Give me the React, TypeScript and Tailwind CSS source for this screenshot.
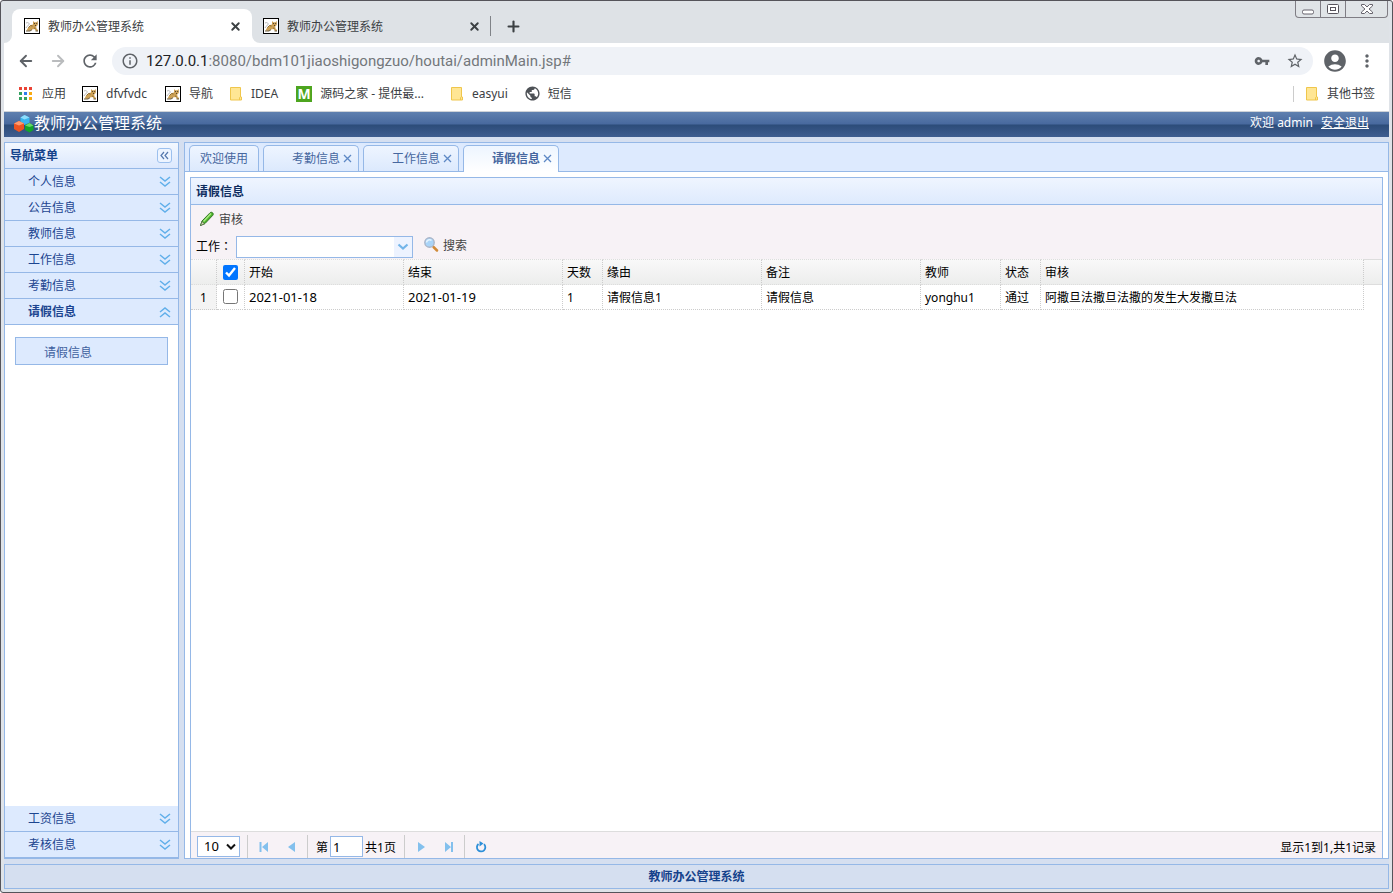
import { ArrowLeft, ArrowRight, X, Plus } from 'lucide-react';
import { MdRefresh, MdInfoOutline, MdVpnKey, MdStarBorder, MdAccountCircle, MdMoreVert, MdPublic } from 'react-icons/md';

const CJK = "font-['Noto_Sans','Noto_Sans_CJK_SC',sans-serif]";

const topMenus = ['个人信息', '公告信息', '教师信息', '工作信息', '考勤信息'];
const bottomMenus = ['工资信息', '考核信息'];

const columns = [
  { title: '开始', width: 'w-[159px]', value: '2021-01-18', cell: 'text-[13px]' },
  { title: '结束', width: 'w-[159px]', value: '2021-01-19', cell: 'text-[13px]' },
  { title: '天数', width: 'w-[40px]', value: '1', cell: 'pt-[2px]' },
  { title: '缘由', width: 'w-[159px]', value: '请假信息1', cell: 'pt-[2px]' },
  { title: '备注', width: 'w-[159px]', value: '请假信息', cell: 'pt-[2px]' },
  { title: '教师', width: 'w-[80px]', value: 'yonghu1', cell: 'pt-[2px]' },
  { title: '状态', width: 'w-[40px]', value: '通过', cell: 'pt-[2px]' },
  { title: '审核', width: 'w-[323px]', value: '阿撒旦法撒旦法撒的发生大发撒旦法', cell: 'pt-[2px]' },
];

function TomcatIcon() {
  return (
    <svg width="16" height="16" viewBox="0 0 16 16" className="shrink-0">
      <rect x="0.5" y="0.5" width="15" height="15" fill="#fff" stroke="#000" />
      <path d="M2 5c2-1 3.500 0 3 1.500S2.500 8 2 10" stroke="#b5b5b5" fill="none" />
      <path d="M2.500 12.500l2-3.500 2.500-2 2-.500V3l1.300 1.200h2L13.800 3v4l-1.600 1.500.300 2 1.500 1.500v1h-2L10.500 11l-2.500.500-2 1.500z" fill="#cda155" />
      <path d="M2 13h4l2-1.300M11.500 13H14" stroke="#6b5c43" fill="none" />
      <path d="M4.500 9.500l2-2 2 .500M10 10l1.500.500" stroke="#8b6a34" fill="none" />
      <path d="M10 5.500h1M12.200 5.500h1M11 7.500h1" stroke="#50402b" />
    </svg>
  );
}

function FolderIcon() {
  return (
    <svg width="14" height="16" viewBox="0 0 14 16" className="shrink-0">
      <path d="M1.500 1.500h10v9.500h1v3h-11z" fill="#ffe694" stroke="#efc64c" />
      <path d="M10.500 14v-2.500l1-1" fill="none" stroke="#efc64c" />
    </svg>
  );
}

function Chevrons({ up = false }: { up?: boolean }) {
  return (
    <svg width="12" height="12" viewBox="0 0 12 12" className={up ? 'rotate-180' : ''}>
      <path d="M1 1l5 4 5-4M1 6l5 4 5-4" fill="none" stroke="#61afea" strokeWidth="1.500" />
    </svg>
  );
}

function BrowserTab({ active = false }: { active?: boolean }) {
  return (
    <div className={`relative flex h-[34px] w-60 items-center pr-[10px] pl-3 ${active ? 'rounded-t-lg bg-white' : ''}`}>
      {active && (
        <>
          <svg width="8" height="8" className="absolute bottom-0 -left-2"><path d="M8 0v8H0a8 8 0 0 0 8-8z" fill="#fff" /></svg>
          <svg width="8" height="8" className="absolute -right-2 bottom-0"><path d="M0 0v8h8a8 8 0 0 1-8-8z" fill="#fff" /></svg>
        </>
      )}
      <TomcatIcon />
      <span className="ml-2 flex-1 pt-[2px] text-xs text-[#3c4043]">教师办公管理系统</span>
      <button aria-label="关闭" className="text-[#3c4043]"><X size={13} strokeWidth={3.5} /></button>
    </div>
  );
}

function WindowButtons() {
  return (
    <div className="absolute top-0 right-px flex h-[17px] rounded-b border border-t-0 border-[#7f7d84] bg-[#e0e4e7]">
      <button aria-label="最小化" className="flex w-[25px] items-end justify-center border-r border-[#7f7d84] pb-[2px]">
        <svg width="12" height="6"><rect x="0.500" y="1" width="11" height="4" rx="1.500" fill="#fff" stroke="#66636c" /></svg>
      </button>
      <button aria-label="最大化" className="flex w-[25px] items-center justify-center border-r border-[#7f7d84]">
        <svg width="12" height="10"><rect x="0.500" y="0.500" width="11" height="9" rx="1" fill="#fff" stroke="#57545c" /><rect x="3.500" y="3.500" width="5" height="3" fill="none" stroke="#57545c" /></svg>
      </button>
      <button aria-label="关闭窗口" className="flex w-[41px] items-center justify-center">
        <svg width="12" height="10" viewBox="0 0 12 10"><path d="M.5.5h3L6 3 8.500.5h3v1.500L8 5l3.500 3v1.500h-3L6 7 3.500 9.500h-3V8L4 5 .5 2z" fill="#fff" stroke="#66636c" /></svg>
      </button>
    </div>
  );
}

function BrowserChrome() {
  return (
    <div className="shrink-0 text-[#3c4043]">
      <div className="relative flex h-[42px] items-end bg-[#dee2e6] pl-2">
        <BrowserTab active />
        <div className="-ml-px"><BrowserTab /></div>
        <div className="mb-[7px] -ml-px h-5 w-px bg-[#808388]" />
        <button aria-label="新标签页" className="mb-2 ml-[14px]"><Plus size={17} strokeWidth={3} /></button>
        <WindowButtons />
      </div>

      <div className="flex h-9 items-center bg-white pr-3 pl-[13px]">
        <button aria-label="后退" className="text-[#5f6368]"><ArrowLeft size={18} strokeWidth={2.500} /></button>
        <button aria-label="前进" className="ml-[14px] text-[#babcbe]"><ArrowRight size={18} strokeWidth={2.500} /></button>
        <button aria-label="刷新" className="ml-[13px] text-[#5f6368]"><MdRefresh size={20} /></button>
        <div className="ml-3 flex h-7 flex-1 items-center rounded-full bg-[#eff2f7] px-[9px] text-[#5f6368]">
          <MdInfoOutline size={18} />
          <span className="ml-[7px] flex-1 font-[Roboto,sans-serif] text-[15px] leading-7 text-[#73777b]">
            <span className="text-[#202124]">127.0.0.1</span>:8080/bdm101jiaoshigongzuo/houtai/adminMain.jsp#
          </span>
          <button aria-label="密码"><MdVpnKey size={16} /></button>
          <button aria-label="收藏" className="ml-4"><MdStarBorder size={18} /></button>
        </div>
        <button aria-label="用户" className="ml-[9px] text-[#5f6368]"><MdAccountCircle size={26} /></button>
        <button aria-label="更多" className="ml-[9px] text-[#5f6368]"><MdMoreVert size={20} /></button>
      </div>

      <div className="flex h-[33px] items-center border-b border-[#cfd3d8] bg-white pr-[14px] pb-[3px] pl-[15px] text-xs">
        <a href="#" className="flex items-center gap-[9px]">
          <svg width="14" height="14">
            <path d="M0 0h3v3H0zM5 0h3v3H5zM10 0h3v3h-3z" fill="#ea4335" />
            <path d="M0 5h3v3H0zM0 10h3v3H0zM5 10h3v3H5z" fill="#34a160" />
            <path d="M5 5h3v3H5z" fill="#2f7df0" />
            <path d="M10 5h3v3h-3zM10 10h3v3h-3z" fill="#f9ab12" />
          </svg>
          应用
        </a>
        <a href="#" className="ml-4 flex items-center gap-2"><TomcatIcon />dfvfvdc</a>
        <a href="#" className="ml-[18px] flex items-center gap-2"><TomcatIcon />导航</a>
        <a href="#" className="ml-4 flex items-center gap-2"><FolderIcon />IDEA</a>
        <a href="#" className="ml-[18px] flex items-center gap-2">
          <span className="size-4 bg-[#4da51f] text-center text-sm leading-4 font-bold text-white">M</span>
          源码之家 - 提供最...
        </a>
        <a href="#" className="ml-[26px] flex items-center gap-2"><FolderIcon />easyui</a>
        <a href="#" className="ml-4 flex items-center gap-[7px]"><MdPublic size={17} className="text-[#4d5156]" />短信</a>
        <div className="flex-1" />
        <div className="h-4 w-px bg-[#ccc]" />
        <a href="#" className="ml-[11px] flex items-center gap-2"><FolderIcon />其他书签</a>
      </div>
    </div>
  );
}

function AppHeader() {
  return (
    <header className="flex h-[25px] shrink-0 items-center bg-linear-[180deg,#5f80af_0%,#48699e_48%,#2c4c79_52%,#3e5d90_100%] pr-5 pb-1 pl-[10px] text-white">
      <svg width="20" height="18" viewBox="0 0 20 18" className="mt-[3px] shrink-0">
        <path d="M10.500 0l5 2.500v5l-5 2.500-4-2.500v-5z" fill="#39b5ed" />
        <path d="M10.500 0l5 2.500-5 2-4-2z" fill="#8ddcfb" />
        <path d="M5 6l5 2.500v5.500l-5 3-5-3V8.500z" fill="#ed5422" />
        <path d="M5 6l5 2.500-5 2-5-2z" fill="#ff9a6e" />
        <path d="M15.500 8l4 2.500v4.500l-4 2.500-4.500-2.500v-4.500z" fill="#12a52a" />
        <path d="M15.500 8l4 2.500-4 1.500-4.500-1.500z" fill="#65d968" />
      </svg>
      <h1 className="flex-1 text-base leading-5">教师办公管理系统</h1>
      <span className="text-xs">欢迎 admin</span>
      <a href="#" className="ml-2 text-xs underline">安全退出</a>
    </header>
  );
}

function MenuItem({ title }: { title: string }) {
  return (
    <button className="flex h-[26px] w-full shrink-0 items-center justify-between border-b border-[#95b8e7] bg-[#ddeafe] pr-[7px] pl-[23px] text-xs text-[#1c4590]">
      {title}
      <Chevrons />
    </button>
  );
}

function Sidebar() {
  return (
    <nav className="flex w-[175px] shrink-0 flex-col border border-[#95b8e7] bg-white text-xs">
      <div className="flex h-[26px] shrink-0 items-center justify-between border-b border-[#95b8e7] bg-linear-to-b from-[#f3f8ff] to-[#dce8fd] pr-[6px] pl-[5px] font-bold text-[#15428b]">
        导航菜单
        <button aria-label="收起" className="mb-px flex size-[15px] items-center justify-center rounded-[3px] border border-[#9cc0ee] bg-[#edf4ff]">
          <svg width="9" height="9"><path d="M4 1l-3 3.500 3 3.500M8 1l-3 3.500 3 3.500" fill="none" stroke="#5578ad" strokeWidth="1.200" /></svg>
        </button>
      </div>
      {topMenus.map((title) => <MenuItem key={title} title={title} />)}
      <button className="flex h-[26px] w-full shrink-0 items-center justify-between border-b border-[#95b8e7] bg-[#ddeafe] pr-[7px] pl-[23px] font-bold text-[#1c4590]">
        请假信息
        <Chevrons up />
      </button>
      <div className="flex-1 px-[10px] pt-3">
        <a href="#" className="flex h-7 items-center border border-[#95b8e7] bg-[#ddeafe] pt-[3px] pl-7 text-[#3f619f]">请假信息</a>
      </div>
      {bottomMenus.map((title) => <MenuItem key={title} title={title} />)}
    </nav>
  );
}

function Tabs() {
  return (
    <div className="flex h-[29px] shrink-0 items-end gap-1 border-b border-[#95b8e7] bg-[#ddeafe] pl-1 text-xs text-[#46679f]">
      <button className="h-[26px] w-[70px] rounded-t-[5px] border border-b-0 border-[#95b8e7] bg-linear-to-b from-[#eef5ff] to-[#dce9fd]">欢迎使用</button>
      {['考勤信息', '工作信息', '请假信息'].map((title) => (
        <button
          key={title}
          className={`flex w-24 items-center justify-end gap-[3px] rounded-t-[5px] border border-b-0 border-[#95b8e7] bg-linear-to-b pr-[6px] ${
            title === '请假信息' ? '-mb-px h-[27px] from-[#edf5ff] to-white pb-px font-bold' : 'h-[26px] from-[#eef5ff] to-[#dce9fd]'
          }`}
        >
          {title}
          <svg width="9" height="9"><path d="M1 1l7 7M8 1l-7 7" stroke="#5d88c5" strokeWidth="1.300" /></svg>
        </button>
      ))}
    </div>
  );
}

function Toolbar() {
  return (
    <div className="h-[54px] shrink-0 bg-[#f7f2f6] text-xs">
      <div className="flex h-7 items-center pl-2">
        <button className="flex items-center gap-1 text-[#444]">
          <svg width="16" height="16" viewBox="0 0 16 16">
            <path d="M1.500 14.500l1.500-4.500L11 1.800c.8-.8 2-.6 2.600 0s1 1.500.2 2.500L6 12.500z" fill="#4cb42b" stroke="#347526" />
            <path d="M4.500 10.500l7.500-8" stroke="#aae982" strokeWidth="1.500" />
            <path d="M1.500 14.500l1.500-4 2.500 2.300z" fill="#d8dfba" stroke="#49633c" strokeWidth="0.700" />
          </svg>
          <span className="pt-[2px]">审核</span>
        </button>
      </div>
      <div className="flex h-6 items-center pl-[5px]">
        <label htmlFor="work" className="w-10 pt-[2px] whitespace-nowrap">工作<span className="font-['Noto_Sans_CJK_TC',sans-serif]">：</span></label>
        <div className="mt-[3px] flex h-[22px] w-[177px] border border-[#95b8e7] bg-white">
          <input id="work" className="min-w-0 flex-1 px-1 outline-none" />
          <button aria-label="展开" className="flex w-[18px] items-center justify-center bg-[#edf3ff]">
            <svg width="12" height="8"><path d="M1.500 1.500L6 5.500l4.500-4" fill="none" stroke="#73b5e9" strokeWidth="2.200" /></svg>
          </button>
        </div>
        <button className="ml-[10px] flex items-center gap-1 text-[#444]">
          <svg width="16" height="16" viewBox="0 0 16 16">
            <path d="M10.500 10l3.500 3.500" stroke="#d08a38" strokeWidth="2.500" strokeLinecap="round" />
            <circle cx="6.500" cy="5.500" r="4.700" fill="#a9d4f8" stroke="#a9b5c8" strokeWidth="1.400" />
            <path d="M3.500 5.500a3 3 0 0 1 5-2" fill="none" stroke="#e5f4ff" strokeWidth="1.500" />
          </svg>
          <span className="pt-[2px]">搜索</span>
        </button>
      </div>
    </div>
  );
}

function LeaveTable() {
  return (
    <table className="w-full table-fixed border-separate border-spacing-0 text-xs text-black">
      <thead>
        <tr className="h-[26px] bg-linear-to-b from-[#f9f9f9] to-[#ecedec] text-left [&>th]:border-y [&>th]:border-y-[#ddd] [&>th]:font-normal">
          <th aria-label="序号" className="w-[26px] border-r border-dotted border-r-[#ccc] [border-block-style:solid]" />
          <th className="w-[28px] border-r border-dotted border-r-[#ccc] [border-block-style:solid]">
            <input type="checkbox" aria-label="全选" defaultChecked className="mx-auto block size-[15px]" />
          </th>
          {columns.map((c) => (
            <th key={c.title} className={`${c.width} border-r border-dotted border-r-[#ccc] pt-[2px] pl-1 [border-block-style:solid]`}>{c.title}</th>
          ))}
          <th aria-hidden="true" />
        </tr>
      </thead>
      <tbody>
        <tr className="h-[25px] [&>td]:border-[#ccc]">
          <td className="border-r border-b border-dotted bg-[#f4f4f4] pt-[2px] text-center">1</td>
          <td className="border-r border-b border-dotted pb-px">
            <input type="checkbox" aria-label="选择第1行" className="mx-auto block size-[15px]" />
          </td>
          {columns.map((c) => (
            <td key={c.title} className={`border-r border-b border-dotted pl-1 leading-4 whitespace-nowrap ${c.cell}`}>{c.value}</td>
          ))}
          <td />
        </tr>
      </tbody>
    </table>
  );
}

function Separator() {
  return <div className="h-full w-px bg-[#ccc]" />;
}

function Pager() {
  return (
    <div className="flex h-[27px] shrink-0 items-end border-t border-[#ddd] bg-[#f7f2f6] pr-[6px] pl-[6px] text-xs text-black">
      <div className="relative mb-px flex">
        <select aria-label="每页条数" className="h-[21px] w-[43px] appearance-none border border-[#95b8e7] bg-white pl-[6px] text-[13px]">
          <option>10</option>
        </select>
        <svg width="10" height="7" className="pointer-events-none absolute top-[7px] right-1"><path d="M1 1.500l4 4 4-4" fill="none" stroke="#111" strokeWidth="2" /></svg>
      </div>
      <div className="ml-[7px] flex h-[23px] items-center">
        <Separator />
        <button aria-label="首页" className="ml-[11px]"><svg width="10" height="10"><path d="M0.500 0h2v10h-2zM9 0v10L3 5z" fill="#83c0ed" /></svg></button>
        <button aria-label="上一页" className="ml-[18px]"><svg width="10" height="10"><path d="M8 0v10L1 5z" fill="#83c0ed" /></svg></button>
        <div className="ml-[10px] h-full"><Separator /></div>
        <label htmlFor="page" className="ml-2 pt-[2px]">第</label>
        <input id="page" defaultValue="1" className="ml-[2px] h-[21px] w-[33px] border border-[#95b8e7] bg-white px-[2px] text-[13px] outline-none" />
        <span className="ml-[2px] pt-[2px]">共1页</span>
        <div className="ml-2 h-full"><Separator /></div>
        <button aria-label="下一页" className="ml-[12px]"><svg width="10" height="10"><path d="M1 0v10l7-5z" fill="#83c0ed" /></svg></button>
        <button aria-label="末页" className="ml-[17px]"><svg width="10" height="10"><path d="M1 0v10l6-5zM7 0h2v10H7z" fill="#83c0ed" /></svg></button>
        <div className="ml-[10px] h-full"><Separator /></div>
        <button aria-label="重新加载" className="ml-[10px]">
          <svg width="12" height="12"><path d="M3.500 3A4.200 4.200 0 1 0 9 3.200" fill="none" stroke="#2d8fd8" strokeWidth="1.800" /><path d="M4.500 0l4 2.500-4 3z" fill="#2d8fd8" /></svg>
        </button>
      </div>
      <span className="ml-auto pb-[2px]">显示1到1,共1记录</span>
    </div>
  );
}

export default function App() {
  return (
    <div className={`flex h-screen flex-col overflow-hidden rounded-[3px] border border-[#55545a] bg-[#dfe3e8] px-[3px] pb-[3px] ${CJK}`}>
      <BrowserChrome />
      <AppHeader />
      <div className="flex min-h-0 flex-1 flex-col gap-[5px] bg-[#d5dff0] pt-[5px]">
        <div className="flex min-h-0 flex-1 gap-[5px]">
          <Sidebar />
          <main className="flex min-w-0 flex-1 flex-col border border-[#95b8e7] bg-white">
            <Tabs />
            <section className="mx-[5px] mt-[5px] flex min-h-0 flex-1 flex-col border border-b-0 border-[#95b8e7]">
              <h2 className="flex h-[27px] shrink-0 items-center border-b border-[#95b8e7] bg-linear-to-b from-[#eff5ff] to-[#deeafd] pt-[2px] pl-[5px] text-xs font-bold text-[#0e2d5f]">请假信息</h2>
              <Toolbar />
              <div className="flex-1"><LeaveTable /></div>
              <Pager />
            </section>
          </main>
        </div>
        <footer className="flex h-[25px] shrink-0 items-center justify-center border border-[#95b8e7] text-xs font-bold text-[#15428b]">教师办公管理系统</footer>
      </div>
    </div>
  );
}
